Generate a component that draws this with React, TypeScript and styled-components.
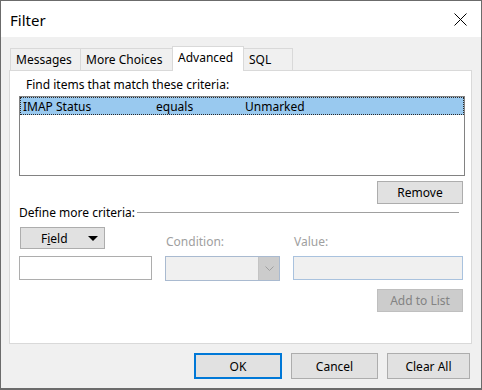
import React from "react";
import styled, { createGlobalStyle, css } from "styled-components";

const GlobalStyle = createGlobalStyle`
  html, body {
    margin: 0;
    padding: 0;
    background: #ffffff;
  }
  body {
    font-family: "Noto Sans", "Open Sans", Arial, sans-serif;
    font-size: 12px;
    color: #000;
  }
  * { box-sizing: border-box; }
`;

const Window = styled.div`
  width: 482px;
  height: 390px;
  border: 1px solid #6b6b6b;
  border-bottom-width: 2px;
  background: #f0f0f0;
  display: flex;
  flex-direction: column;
`;

const TitleBar = styled.div`
  height: 36px;
  background: #ffffff;
  display: flex;
  align-items: center;
  justify-content: space-between;
  padding: 0 14px 0 9px;
`;

const Title = styled.div`
  font-size: 15px;
  line-height: 20px;
  margin-top: 1px;
`;

const Body = styled.div`
  flex: 1;
  padding: 9px 9px 0 8px;
  display: flex;
  flex-direction: column;
`;

const TabStrip = styled.div`
  height: 24px;
  display: flex;
  align-items: flex-end;
  padding-left: 1px;
`;

const Tab = styled.div<{ $active?: boolean; $w: number }>`
  width: ${(p) => p.$w}px;
  height: 22px;
  border: 1px solid #d9d9d9;
  border-bottom: none;
  margin-right: -1px;
  padding-left: 5px;
  line-height: 21px;
  background: #f0f0f0;
  white-space: nowrap;
  ${(p) =>
    p.$active &&
    css`
      height: 25px;
      margin-bottom: -1px;
      background: #ffffff;
      line-height: 22px;
      position: relative;
      z-index: 1;
    `}
`;

const Panel = styled.div`
  height: 274px;
  background: #ffffff;
  border: 1px solid #d9d9d9;
  padding: 6px 6px 0 9px;
  display: flex;
  flex-direction: column;
`;

const Caption = styled.div`
  line-height: 16px;
  padding-left: 7px;
`;

const ListBox = styled.div`
  margin-top: 3px;
  height: 80px;
  border: 1px solid #828282;
  padding: 0;
`;

const ListRow = styled.div<{ $selected?: boolean }>`
  height: 18px;
  display: grid;
  grid-template-columns: 133px 89px 1fr;
  align-items: center;
  padding-left: 3px;
  ${(p) =>
    p.$selected &&
    css`
      background: #99c9ef;
      border: 1px dotted #2a2a2a;
      padding-left: 2px;
    `}
`;

const RightRow = styled.div<{ $top: number }>`
  display: flex;
  justify-content: flex-end;
  margin-top: ${(p) => p.$top}px;
  padding-right: 2px;
`;

const Button = styled.button<{ $w: number; $h?: number; $default?: boolean }>`
  width: ${(p) => p.$w}px;
  height: ${(p) => p.$h ?? 23}px;
  font-family: inherit;
  font-size: 12px;
  color: #000;
  background: #e1e1e1;
  border: 1px solid #adadad;
  padding: 0;
  margin: 0;
  &:disabled {
    background: #cccccc;
    border-color: #bfbfbf;
    color: #838383;
  }
  ${(p) =>
    p.$default &&
    css`
      border: 2px solid #0078d7;
    `}
`;

const SectionRow = styled.div`
  margin-top: 0px;
  height: 17px;
  display: flex;
  align-items: center;
  &::after {
    content: "";
    flex: 1;
    height: 1px;
    background: #a0a0a0;
    margin: 0 6px 0 2px;
  }
`;

const CriteriaGrid = styled.div`
  margin-top: 6px;
  display: grid;
  grid-template-columns: 133px 115px 170px;
  column-gap: 13px;
  row-gap: 5px;
  grid-template-rows: 24px 24px;
`;

const FieldButton = styled.button`
  width: 85px;
  height: 22px;
  margin-left: 1px;
  display: flex;
  align-items: center;
  padding: 0 6px 0 20px;
  font-family: inherit;
  font-size: 12px;
  color: #000;
  background: #e1e1e1;
  border: 1px solid #adadad;
`;

const Caret = styled.span`
  margin-left: auto;
  width: 0;
  height: 0;
  border-left: 5px solid transparent;
  border-right: 5px solid transparent;
  border-top: 5px solid #000;
`;

const DimLabel = styled.div`
  align-self: end;
  color: #a0a0a0;
  line-height: 16px;
  margin-bottom: 1px;
  padding-left: 1px;
`;

const TextBox = styled.div<{ $disabled?: boolean }>`
  height: 24px;
  border: 1px solid ${(p) => (p.$disabled ? "#a9c2de" : "#adadad")};
  background: ${(p) => (p.$disabled ? "#f0f0f0" : "#ffffff")};
`;

const Combo = styled.div`
  height: 25px;
  border: 1px solid #a9bad0;
  background: #f0f0f0;
  display: flex;
  justify-content: flex-end;
`;

const ComboButton = styled.div`
  width: 21px;
  background: #cccccc;
  border-left: 1px solid #c4c4c4;
  display: flex;
  align-items: center;
  justify-content: center;
`;

const ButtonBar = styled.div`
  margin-top: 9px;
  display: flex;
  justify-content: flex-end;
  gap: 9px;
  padding-right: 2px;
`;

export default function App() {
  return (
    <>
      <GlobalStyle />
      <Window>
        <TitleBar>
          <Title>Filter</Title>
          <svg width="13" height="13" viewBox="0 0 13 13">
            <path d="M0.5 0.5 L12.5 12.5 M12.5 0.5 L0.5 12.5" stroke="#000" strokeWidth="1" />
          </svg>
        </TitleBar>
        <Body>
          <TabStrip>
            <Tab $w={71}>Messages</Tab>
            <Tab $w={93}>More Choices</Tab>
            <Tab $w={72} $active>Advanced</Tab>
            <Tab $w={50}>SQL</Tab>
          </TabStrip>
          <Panel>
            <Caption>Find items that match these criteria:</Caption>
            <ListBox>
              <ListRow $selected>
                <span>IMAP Status</span>
                <span>equals</span>
                <span>Unmarked</span>
              </ListRow>
            </ListBox>
            <RightRow $top={5}>
              <Button $w={86}>Remove</Button>
            </RightRow>
            <SectionRow>Define more criteria:</SectionRow>
            <CriteriaGrid>
              <FieldButton>
                <span>
                  F<u>i</u>eld
                </span>
                <Caret />
              </FieldButton>
              <DimLabel>Condition:</DimLabel>
              <DimLabel>Value:</DimLabel>
              <TextBox />
              <Combo>
                <ComboButton>
                  <svg width="9" height="5" viewBox="0 0 9 5">
                    <path d="M0.5 0.5 L4.5 4.5 L8.5 0.5" stroke="#a0a0a0" fill="none" strokeWidth="1" />
                  </svg>
                </ComboButton>
              </Combo>
              <TextBox $disabled />
            </CriteriaGrid>
            <RightRow $top={9}>
              <Button $w={86} disabled>
                Add to List
              </Button>
            </RightRow>
          </Panel>
          <ButtonBar>
            <Button $w={88} $h={26} $default>
              OK
            </Button>
            <Button $w={87} $h={26}>
              Cancel
            </Button>
            <Button $w={83} $h={26}>
              Clear All
            </Button>
          </ButtonBar>
        </Body>
      </Window>
    </>
  );
}
